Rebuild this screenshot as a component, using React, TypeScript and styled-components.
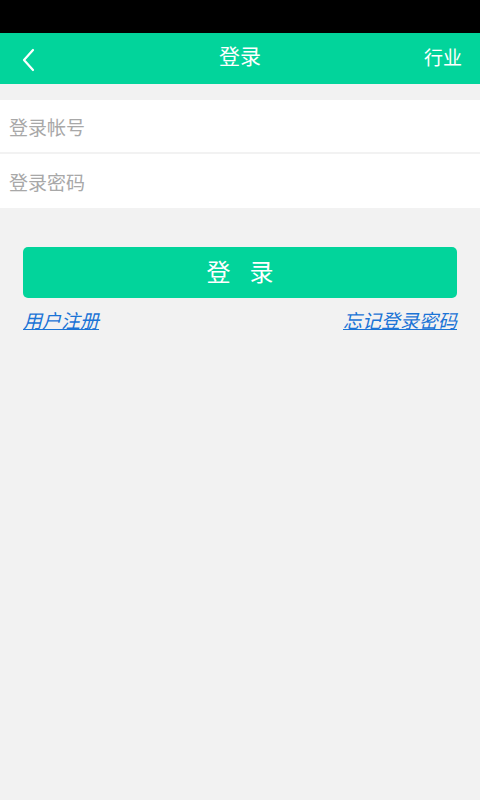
import React from "react";
import styled, { createGlobalStyle } from "styled-components";

const Global = createGlobalStyle`
  html, body { margin: 0; padding: 0; }
  body { background: #f2f2f2; font-family: "Noto Sans CJK SC", "Noto Sans", sans-serif; }
  * { box-sizing: border-box; }
`;

const Page = styled.div`
  width: 480px;
  min-height: 800px;
  background: #f2f2f2;
  display: flex;
  flex-direction: column;
`;

const StatusBar = styled.div`
  height: 33px;
  background: #000;
`;

const Header = styled.div`
  height: 51px;
  background: #02d49b;
  display: flex;
  align-items: center;
  justify-content: space-between;
  padding: 0 18px 0 21px;
  position: relative;
  color: #fff;
`;

const BackBtn = styled.div`
  width: 30px;
  height: 40px;
  display: flex;
  align-items: center;
  margin-top: 3px;
`;

const Title = styled.div`
  position: absolute;
  left: 0;
  right: 0;
  text-align: center;
  font-size: 21px;
  line-height: 51px;
  top: -3px;
  pointer-events: none;
`;

const RightAction = styled.div`
  font-size: 19px;
  margin-top: -4px;
`;

const Form = styled.div`
  margin-top: 16px;
  display: flex;
  flex-direction: column;
  gap: 2px;
`;

const Field = styled.input<{ $h: number }>`
  height: ${(p) => p.$h}px;
  border: none;
  outline: none;
  background: #fff;
  padding: 0 9px;
  font-family: "Noto Sans CJK SC", "Noto Sans", sans-serif;
  font-size: 19px;
  color: #333;
  &::placeholder { color: #a8a8a8; }
`;

const Actions = styled.div`
  padding: 39px 23px 0;
  display: flex;
  flex-direction: column;
`;

const LoginButton = styled.button`
  height: 51px;
  border: none;
  border-radius: 5px;
  background: #02d49b;
  color: #fff;
  font-family: "Noto Sans CJK SC", "Noto Sans", sans-serif;
  font-size: 24px;
  letter-spacing: 19px;
  text-indent: 19px;
  padding: 0 0 5px;
`;

const LinkRow = styled.div`
  display: flex;
  justify-content: space-between;
  margin-top: 9px;
`;

const Link = styled.a`
  color: #1b74d6;
  font-size: 19px;
  font-style: italic;
  text-decoration: underline;
  line-height: 26px;
`;

export default function App() {
  return (
    <Page>
      <Global />
      <StatusBar />
      <Header>
        <BackBtn>
          <svg width="14" height="24" viewBox="0 0 14 24">
            <path d="M12 2 L3 12 L12 22" fill="none" stroke="#fff" strokeWidth="2.2" strokeLinecap="round" strokeLinejoin="round" />
          </svg>
        </BackBtn>
        <Title>登录</Title>
        <RightAction>行业</RightAction>
      </Header>
      <Form>
        <Field $h={52} placeholder="登录帐号" />
        <Field $h={54} type="password" placeholder="登录密码" />
      </Form>
      <Actions>
        <LoginButton>登录</LoginButton>
        <LinkRow>
          <Link>用户注册</Link>
          <Link>忘记登录密码</Link>
        </LinkRow>
      </Actions>
    </Page>
  );
}
